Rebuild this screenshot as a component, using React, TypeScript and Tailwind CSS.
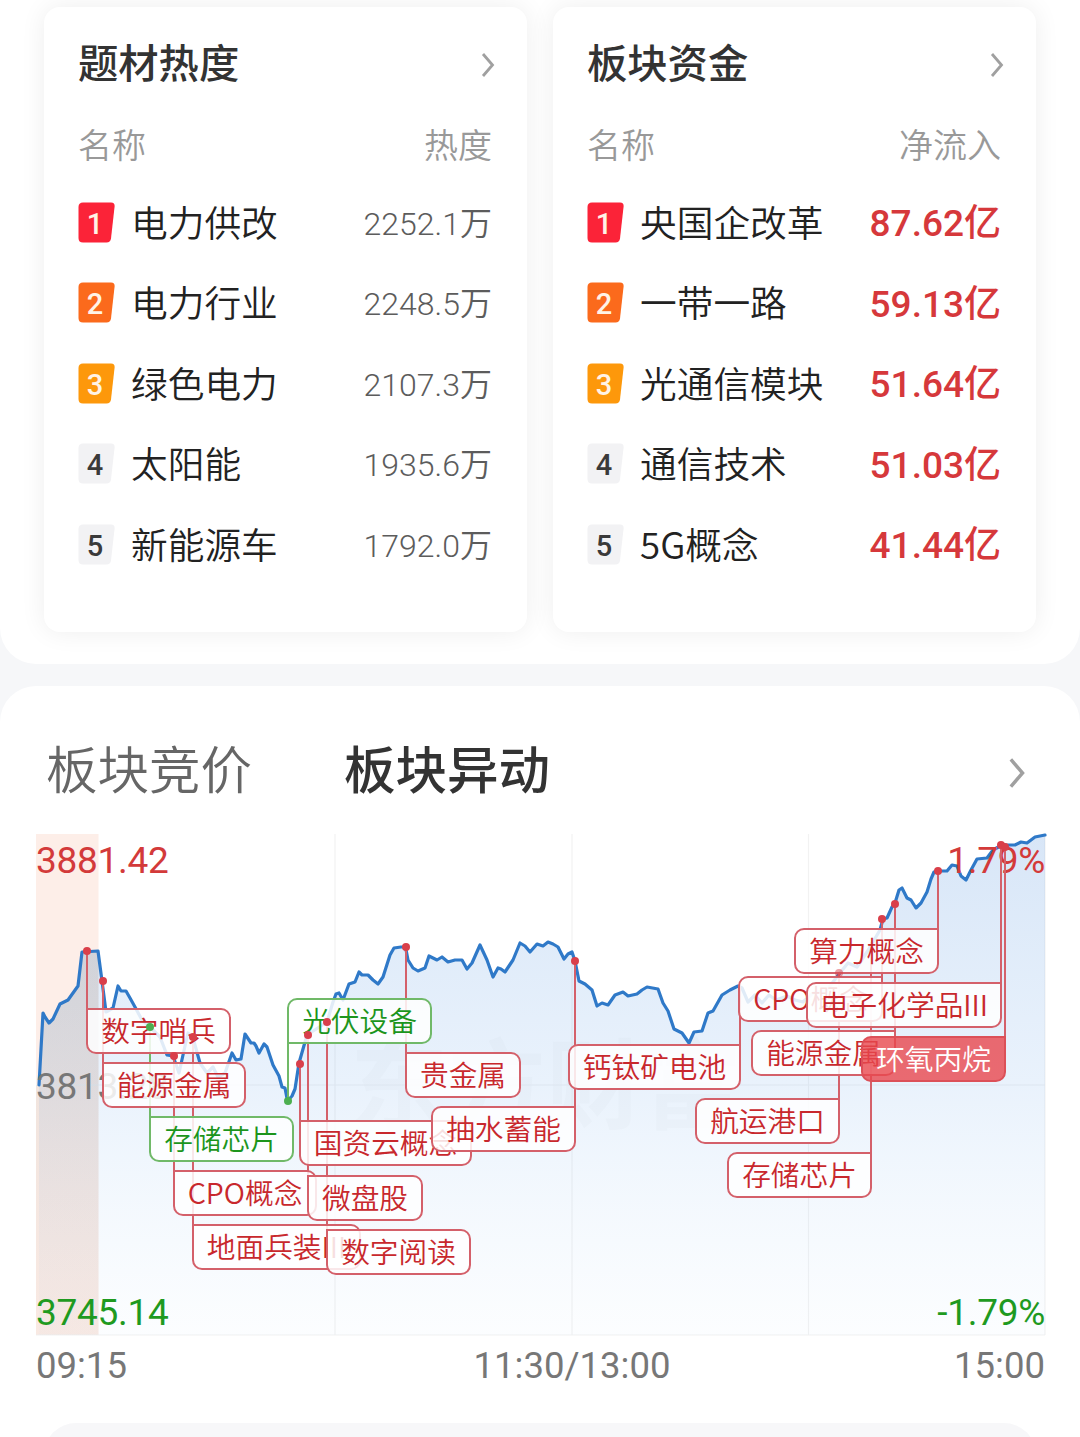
import { clsx } from "clsx";

type Row = { name: string; value: string };

type Tag = {
  text: string;
  x: number;
  y: number;
  w: number;
  // side of the tag that the pin line is attached to
  side: "left" | "right";
  px: number;
  py: number;
  tone?: "red" | "green" | "solid";
  dot?: "faded" | "none";
};

const HOT_ROWS: Row[] = [
  { name: "电力供改", value: "2252.1万" },
  { name: "电力行业", value: "2248.5万" },
  { name: "绿色电力", value: "2107.3万" },
  { name: "太阳能", value: "1935.6万" },
  { name: "新能源车", value: "1792.0万" },
];

const FUND_ROWS: Row[] = [
  { name: "央国企改革", value: "87.62亿" },
  { name: "一带一路", value: "59.13亿" },
  { name: "光通信模块", value: "51.64亿" },
  { name: "通信技术", value: "51.03亿" },
  { name: "5G概念", value: "41.44亿" },
];

const BADGE_FILL = [
  "fill-[#fb2338]",
  "fill-[#fb6a1c]",
  "fill-[#fd980b]",
  "fill-[#f2f2f4]",
  "fill-[#f2f2f4]",
];

// chart coordinates: origin at the top left of the plot area, 1009 x 501
const TAGS: Tag[] = [
  { text: "数字哨兵", x: 50, y: 174, w: 145, side: "left", px: 51, py: 117 },
  { text: "能源金属", x: 66, y: 228, w: 144, side: "left", px: 67, py: 147 },
  { text: "存储芯片", x: 113, y: 282, w: 145, side: "left", px: 114, py: 193, tone: "green" },
  { text: "CPO概念", x: 137, y: 336, w: 144, side: "left", px: 138, py: 222 },
  { text: "地面兵装III", x: 156, y: 390, w: 169, side: "left", px: 157, py: 203 },
  { text: "光伏设备", x: 251, y: 164, w: 145, side: "left", px: 252, py: 267, tone: "green" },
  { text: "国资云概念", x: 263, y: 286, w: 173, side: "left", px: 264, py: 230 },
  { text: "微盘股", x: 271, y: 341, w: 116, side: "left", px: 272, py: 201 },
  { text: "数字阅读", x: 290, y: 395, w: 145, side: "left", px: 291, py: 188 },
  { text: "贵金属", x: 369, y: 218, w: 116, side: "left", px: 370, py: 113 },
  { text: "抽水蓄能", x: 395, y: 272, w: 145, side: "right", px: 539, py: 127 },
  { text: "钙钛矿电池", x: 532, y: 210, w: 173, side: "right", px: 704, py: 152, dot: "none" },
  { text: "航运港口", x: 659, y: 264, w: 145, side: "right", px: 803, py: 139, dot: "faded" },
  { text: "存储芯片", x: 691, y: 318, w: 145, side: "right", px: 835, py: 108, dot: "none" },
  { text: "CPO概念", x: 702, y: 142, w: 145, side: "right", px: 846, py: 85 },
  { text: "能源金属", x: 715, y: 196, w: 145, side: "right", px: 859, py: 70 },
  { text: "算力概念", x: 758, y: 94, w: 145, side: "right", px: 902, py: 37 },
  { text: "电子化学品III", x: 770, y: 148, w: 196, side: "right", px: 965, py: 11 },
  { text: "环氧丙烷", x: 825, y: 202, w: 145, side: "right", px: 969, py: 13, tone: "solid" },
];

const POINTS = [
  [3, 251], [7, 179], [9, 183], [13, 189], [17, 185], [24, 170], [32, 166], [42, 152], [46, 118],
  [62, 117], [66, 147], [70, 178], [77, 174], [82, 152], [85, 157], [90, 157], [94, 164],
  [99, 173], [106, 186], [114, 193], [124, 203], [131, 221], [137, 222], [143, 239], [149, 212],
  [152, 199], [157, 204], [164, 229], [171, 239], [177, 233], [182, 243], [189, 239], [196, 219],
  [200, 226], [205, 225], [209, 200], [215, 209], [218, 209], [220, 212], [223, 219], [228, 210],
  [231, 213], [237, 231], [243, 242], [246, 253], [249, 254], [251.5, 267], [256, 262], [259, 255],
  [263, 229], [271, 201], [291, 188], [297, 168], [300, 160], [303, 159], [307, 166], [313, 150],
  [319, 148], [323, 138], [326, 141], [332, 141], [337, 146], [342, 150], [347, 143], [354, 121],
  [358, 114], [365, 113], [369.5, 113], [372, 126], [377, 134], [382, 137], [389, 134], [393, 122],
  [401, 126], [406, 123], [412, 128], [419, 126], [426, 126], [431, 135], [436, 129], [444, 111],
  [451, 126], [457, 143], [462, 134], [465, 135], [469, 138], [477, 126], [484, 109], [489, 112],
  [494, 118], [501, 110], [507, 112], [512, 108], [517, 110], [522, 113], [528, 125], [532, 120],
  [536, 118], [539, 127], [543, 147], [549, 150], [556, 156], [561, 172], [566, 169], [572, 171],
  [579, 161], [587, 158], [592, 162], [601, 160], [606, 156], [611, 153], [622, 155], [627, 169],
  [632, 177], [638, 195], [646, 199], [653, 209], [658, 198], [666, 197], [672, 179], [677, 177],
  [686, 161], [694, 156], [702, 152], [706, 154], [712, 168], [719, 161], [726, 169], [733, 161],
  [740, 166], [751, 162], [759, 166], [767, 168], [777, 159], [791, 156], [803, 140], [812, 129],
  [821, 133], [831, 118], [844, 96], [847, 85], [851, 84], [856, 73], [859, 69], [863, 56],
  [866, 54], [871, 64], [875, 66], [880, 74], [885, 69], [891, 58], [895, 45], [898, 38],
  [902, 37], [911, 37], [916, 31], [921, 32], [925, 42], [930, 46], [935, 36], [941, 25],
  [951, 24], [957, 16], [966, 11], [979, 11], [985, 8], [991, 9], [999, 3], [1009, 1],
];

const LINE = POINTS.map((p) => p.join(",")).join(" ");

function Chevron({ className }: { className?: string }) {
  return (
    <svg viewBox="0 0 14 26" className={className} fill="none">
      <path d="M2 2 L11.5 13 L2 24" stroke="#a0a0a0" strokeWidth="2.8" />
    </svg>
  );
}

function RankBadge({ rank }: { rank: number }) {
  return (
    <div className="relative h-[41px] w-[37px] shrink-0">
      <svg viewBox="0 0 37 41" className={clsx("h-full w-full", BADGE_FILL[rank - 1])}>
        <path d="M5 0.5 H33 Q37 0.5 36.6 4.5 L33 36.5 Q32.4 40.5 28.5 40.5 H5 Q0.5 40.5 0.5 36 V5 Q0.5 0.5 5 0.5 Z" />
      </svg>
      <span
        className={clsx(
          "absolute inset-0 flex items-center justify-center pt-[4px] pr-[3px] font-[Roboto] text-[29px] leading-none font-medium",
          rank > 3 ? "text-[#3a3a3a]" : "text-[#fff3e6]"
        )}
      >
        {rank}
      </span>
    </div>
  );
}

function RankCard({
  title,
  column,
  rows,
  money,
}: {
  title: string;
  column: string;
  rows: Row[];
  money?: boolean;
}) {
  return (
    <div className="h-[625px] flex-1 rounded-[16px] bg-white pt-[23px] pr-[35px] pl-[34px] shadow-[0_0_26px_rgba(0,0,0,0.07)]">
      <div className="flex h-16 items-center justify-between">
        <h2 className="-mt-[2px] text-[40.3px] leading-none font-medium text-[#333]">{title}</h2>
        <Chevron className="mt-[5px] -mr-[3px] h-[26px] w-[14px]" />
      </div>
      <div className="mt-5 flex h-[60px] items-center justify-between text-[34px] leading-none font-[350] text-[#999]">
        <span>名称</span>
        <span>{column}</span>
      </div>
      <div className="mt-[8px]">
        {rows.map((row, i) => (
          <div key={row.name} className="flex h-[80.5px] items-center">
            <RankBadge rank={i + 1} />
            <span className="-mt-[2px] ml-[16px] text-[36.7px] leading-none font-[350] whitespace-nowrap text-[#222]">
              {row.name}
            </span>
            <span
              className={clsx(
                "ml-auto pt-[3px] font-[Roboto,'Noto_Sans_CJK_SC',sans-serif] leading-none whitespace-nowrap",
                money
                  ? "text-[37px] font-medium text-[#d6383b]"
                  : "text-[32px] font-[350] text-[#5c5c5c]"
              )}
            >
              {row.value}
            </span>
          </div>
        ))}
      </div>
    </div>
  );
}

function TagLabel({ tag }: { tag: Tag }) {
  const below = tag.py > tag.y;
  return (
    <div
      className={clsx(
        "absolute flex h-[46px] items-center justify-center rounded-[10px] border-2 pb-[2px] text-[28.7px] leading-none font-[350] whitespace-nowrap",
        tag.side === "right" && "rounded-tr-none",
        tag.side === "left" && !below && "rounded-tl-none",
        tag.side === "left" && below && "rounded-bl-none",
        tag.tone === "green" && "border-[#70b968] bg-white/85 text-[#1c951c]",
        tag.tone === "solid" && "border-[#dc5058] bg-[#e8474d]/80 text-white",
        !tag.tone && "border-[#d4606a] bg-white/85 text-[#c8282d]"
      )}
      style={{ left: tag.x, top: tag.y, width: tag.w }}
    >
      {tag.text}
    </div>
  );
}

function MoveChart() {
  return (
    <div className="relative h-[501px] w-[1009px]">
      <svg viewBox="0 0 1009 501" className="absolute inset-0 h-full w-full overflow-visible">
        <defs>
          <linearGradient id="area" x1="0" y1="0" x2="0" y2="1">
            <stop offset="0" stopColor="#3c82d8" stopOpacity="0.2" />
            <stop offset="0.5" stopColor="#4a93e6" stopOpacity="0.12" />
            <stop offset="1" stopColor="#8cc0f5" stopOpacity="0.03" />
          </linearGradient>
          <linearGradient id="auction" x1="0" y1="0" x2="0" y2="1">
            <stop offset="0" stopColor="#8a9a94" stopOpacity="0.16" />
            <stop offset="1" stopColor="#c8b4a8" stopOpacity="0.08" />
          </linearGradient>
        </defs>
        <rect x="0" y="0" width="62.5" height="501" fill="#fdeee8" />
        <text
          x="314"
          y="287"
          fontSize="98"
          fontWeight="700"
          fill="#555"
          fillOpacity="0.024"
        >
          东方财富
        </text>
        <g stroke="#f2f2f2" strokeWidth="1.2">
          <path d="M299 0V501M536 0V501M772.5 0V501M0 251H1009M0 501H1009M1009 0V501" />
        </g>
        <polygon points={`3,501 ${LINE} 1009,501`} fill="url(#area)" />
        <polygon
          points="0,501 0,251 3,251 7,179 13,189 17,185 24,170 32,166 42,152 46,118 62.5,117 62.5,501"
          fill="url(#auction)"
        />
        <polyline
          points={LINE}
          fill="none"
          stroke="#2f79c8"
          strokeWidth="3.2"
          strokeLinejoin="round"
          strokeLinecap="round"
        />
      </svg>

      {/* axis values */}
      <div className="absolute inset-0 font-[Roboto] text-[37px] leading-none tracking-[-0.3px]">
        <span className="absolute top-[8px] left-0 text-[#d33a3a]">3881.42</span>
        <span className="absolute top-[8px] right-0 text-[#d33a3a]">1.79%</span>
        <span className="absolute top-[234px] left-0 text-[#777]">3813.28</span>
        <span className="absolute bottom-[4px] left-0 text-[#1f9a1f]">3745.14</span>
        <span className="absolute right-0 bottom-[4px] text-[#1f9a1f]">-1.79%</span>
      </div>

      <svg viewBox="0 0 1009 501" className="absolute inset-0 h-full w-full overflow-visible">
        {TAGS.map((t, i) => (
          <line
            key={i}
            x1={t.px}
            x2={t.px}
            y1={t.py}
            y2={t.py > t.y ? t.y + 45 : t.y + 1}
            stroke={t.tone === "green" ? "#70b968" : "#d4606a"}
            strokeWidth="2"
          />
        ))}
      </svg>

      {TAGS.map((t, i) => (
        <TagLabel key={i} tag={t} />
      ))}

      <svg viewBox="0 0 1009 501" className="absolute inset-0 h-full w-full overflow-visible">
        {TAGS.filter((t) => t.dot !== "none").map((t, i) => (
          <circle
            key={i}
            cx={t.px}
            cy={t.py}
            r="4"
            fill={t.tone === "green" ? "#4caf50" : "#d93f4a"}
            fillOpacity={t.dot === "faded" ? 0.5 : 1}
          />
        ))}
      </svg>
    </div>
  );
}

export default function App() {
  return (
    <div className="h-[1437px] w-[1080px] overflow-hidden bg-[#f6f7f9] font-['Noto_Sans_CJK_SC',sans-serif]">
      <section className="flex h-[664px] gap-[26px] overflow-hidden rounded-b-[36px] bg-white px-[44px] pt-[7px]">
        <RankCard title="题材热度" column="热度" rows={HOT_ROWS} />
        <RankCard title="板块资金" column="净流入" rows={FUND_ROWS} money />
      </section>

      <section className="mt-[22px] h-[751px] overflow-hidden rounded-t-[36px] bg-white pt-[48px]">
        <div className="flex h-[70px] items-center pr-[54px] pl-[46px] text-[51.5px] leading-none">
          <span className="-mt-[5px] font-[350] text-[#666]">板块竞价</span>
          <span className="-mt-[5px] ml-[92px] font-medium text-[#333]">板块异动</span>
          <Chevron className="mt-[8px] ml-auto h-[32px] w-[18px]" />
        </div>
        <div className="mt-[30px] ml-[36px]">
          <MoveChart />
          <div className="mt-[13px] flex w-[1009px] justify-between font-[Roboto] text-[36.5px] leading-none text-[#777]">
            <span className="w-[200px]">09:15</span>
            <span>11:30/13:00</span>
            <span className="w-[137px] text-right">15:00</span>
          </div>
        </div>
        <div className="mx-[44px] mt-[38px] h-[60px] rounded-t-[32px] bg-[#f7f7f9]" />
      </section>
    </div>
  );
}
